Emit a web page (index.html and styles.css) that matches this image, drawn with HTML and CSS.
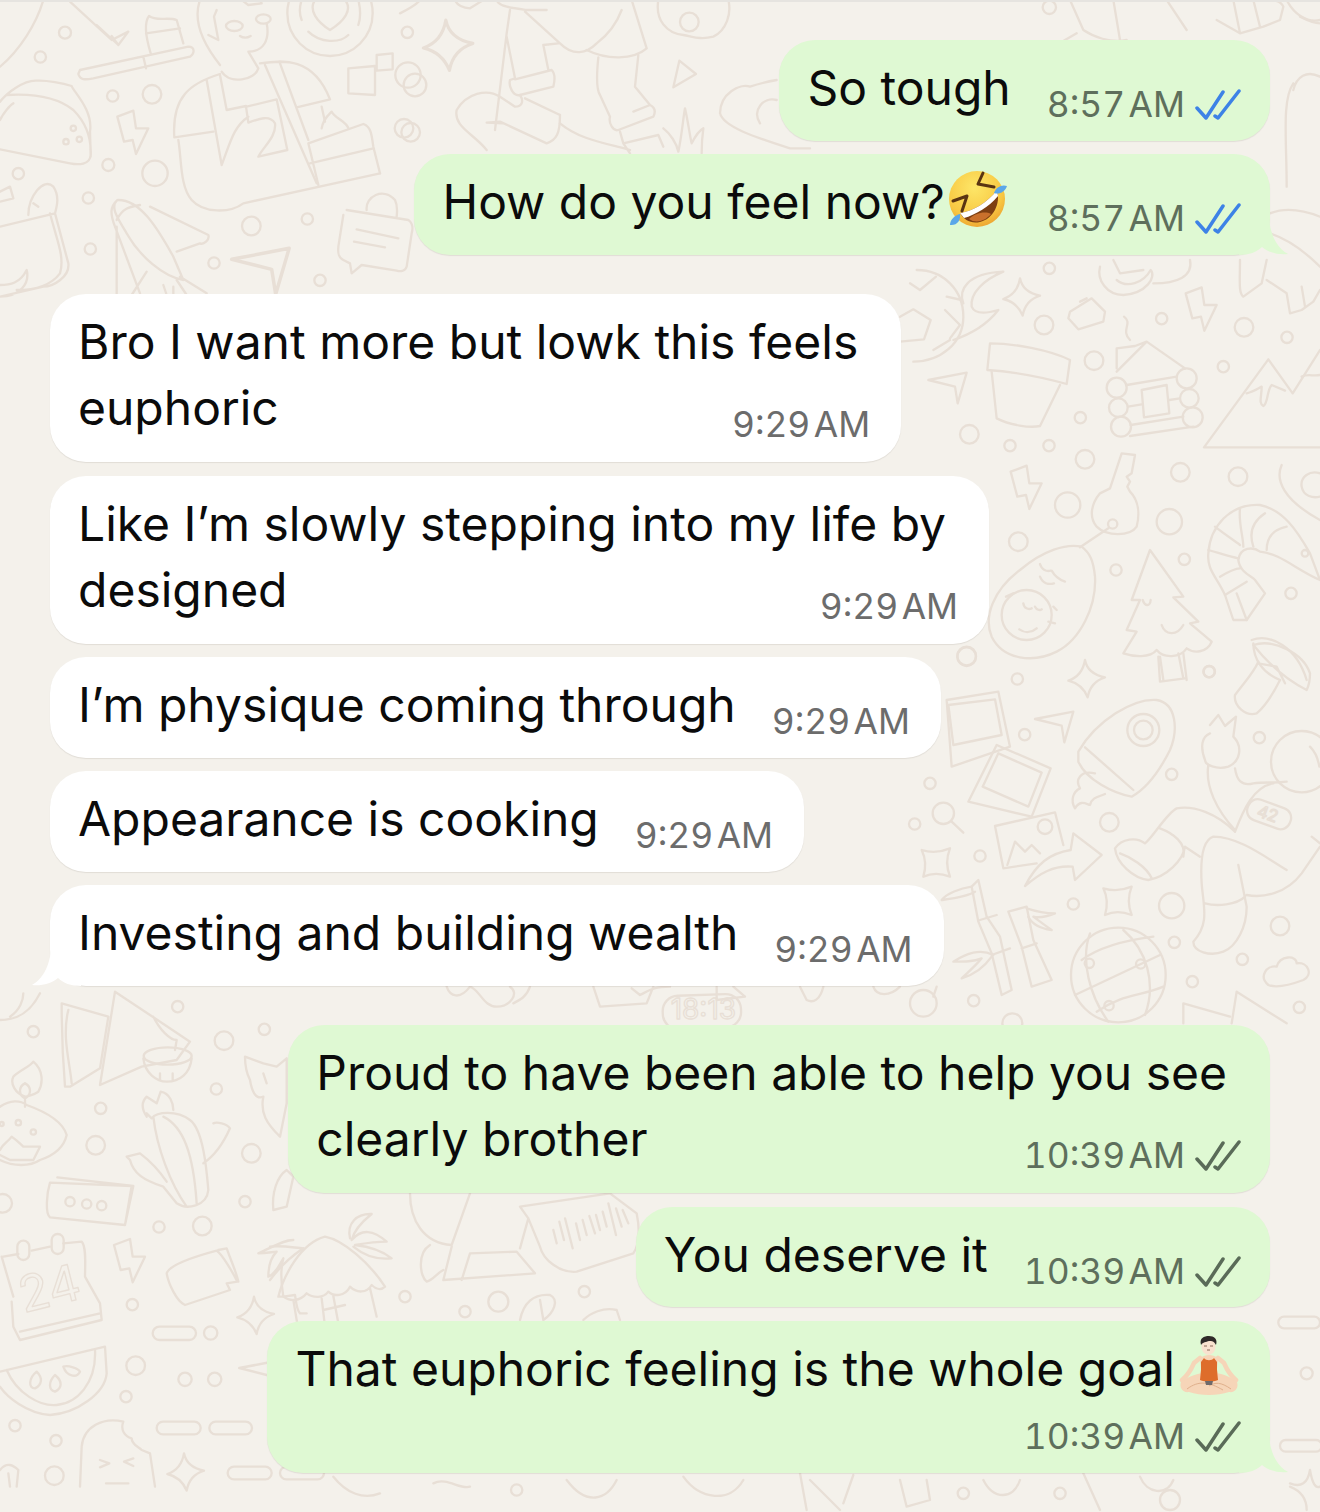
FILE: index.html
```html
<!DOCTYPE html>
<html lang="en">
<head>
<meta charset="utf-8">
<title>Chat</title>
<link rel="stylesheet" href="styles.css">
</head>
<body>
<div class="page">
<svg class="doodles" viewBox="0 0 3960 4536" aria-hidden="true">
  <defs>
    <path id="bolt" d="M2 20 L50 2 L58 55 L95 55 L58 132 L48 90 L22 95 Z"/>
    <path id="star" d="M50 0 Q58 42 110 52 Q66 66 58 112 Q42 72 0 62 Q42 48 50 0Z"/>
    <path id="sq" d="M0 5 Q42 18 85 0 Q68 42 85 85 Q42 68 5 85 Q18 42 0 5Z"/>
    <path id="plane" d="M0 22 L115 0 L88 92 L80 42 Z"/>
    <g id="right-a">
      <path d="M50 30 C130 30 190 90 190 170 C190 250 120 305 40 305"/>
      <path d="M0 170 L40 148 L92 180 L72 238 L0 245 M140 110 L185 120 M135 150 L180 195 L150 235 M108 50 L60 90 L30 70 M100 270 L150 240"/>
      <path d="M190 130 C175 90 200 40 310 35 C250 60 210 100 215 140 C225 165 260 160 295 150 C260 195 205 225 160 240"/>
      <path d="M270 250 C340 250 450 270 510 300 L500 372 C420 350 340 335 262 330 Z"/>
      <path d="M275 335 L290 475 C330 495 390 505 420 498 L480 375"/>
      <path d="M650 325 L650 265 L705 258 L740 245 L855 325 M650 335 L740 245"/>
      <path d="M672 170 C700 190 660 210 690 240"/>
      <circle cx="650" cy="383" r="30"/><circle cx="860" cy="355" r="30"/><circle cx="655" cy="443" r="28"/><circle cx="868" cy="415" r="28"/><circle cx="663" cy="500" r="30"/><circle cx="878" cy="472" r="30"/>
      <path d="M680 375 L830 350 M684 440 L725 433 M808 420 L840 415 M692 495 L850 470 M690 528 L880 500"/>
      <path d="M725 390 L800 375 L808 460 L732 472 Z"/>
      <path d="M912 562 L1105 298 L1178 400 L1260 270 M912 562 L1260 562 M1040 400 C1060 395 1075 385 1085 380 C1085 410 1075 430 1090 438 C1105 430 1100 390 1115 375 L1155 392"/>
      <path d="M1205 350 C1225 340 1240 350 1260 345"/>
      <path d="M600 20 C590 60 620 105 670 105 C740 100 770 50 752 30 C730 70 680 85 650 60 M640 0 L660 40 L730 30 M760 70 C830 70 880 50 870 0"/>
      <path d="M1020 0 C1020 60 1015 100 1030 110 L1085 70 L1100 0 M1160 100 L1170 160 L1205 150 L1240 125 L1260 90 M1205 80 L1215 140 M1100 60 L1160 100"/>
      <path d="M510 155 L575 115 L615 155 L610 185 L535 208 L505 175 Z M540 125 L560 115"/>
      <path d="M1145 615 C1125 660 1150 720 1260 780 M1260 640 C1230 630 1200 650 1205 680 C1210 710 1240 715 1260 710"/>
      <path d="M665 580 L705 585 L695 640 L680 650 L690 665 L682 680 L690 695 C715 720 720 760 710 800 C690 830 620 830 590 800 C565 770 575 730 600 700 L630 685 Z"/>
      <circle cx="638" cy="792" r="14"/><path d="M625 805 L540 862"/>
      <path d="M545 860 C500 850 430 870 360 930 C280 990 250 1070 275 1130 C310 1200 400 1210 470 1175 C540 1140 590 1040 585 950 C580 900 570 880 545 860 Z"/>
      <circle cx="380" cy="1065" r="75"/>
      <path d="M420 912 C425 930 440 935 452 932 M420 950 C428 970 445 975 462 970 M455 932 C465 950 480 960 495 965 M370 1030 C372 1045 385 1050 395 1045 M405 1040 C410 1050 420 1052 425 1048 M358 1108 C375 1120 395 1118 410 1105 M318 1010 L340 1000 M460 1040 L470 1050 M445 1085 L465 1090"/>
      <path d="M750 870 L850 1010 L820 1012 L895 1085 L870 1090 L935 1145 C920 1180 880 1180 860 1165 C840 1195 790 1195 770 1170 C750 1195 700 1190 670 1180 L710 1115 L680 1110 L720 1020 L695 1020 Z"/>
      <path d="M728 1020 C735 1040 750 1040 752 1020 M785 1095 C795 1125 830 1130 850 1095 M780 1190 L790 1260 M850 1180 L860 1260"/>
      <path d="M925 880 C930 800 990 730 1080 735 C1150 750 1190 810 1230 880 L1260 960 C1190 930 1140 880 1080 875 C1060 860 1020 860 1015 900 C1020 940 1060 950 1065 960 L1095 1000 L1040 1080 L1000 1080 L975 1005 C950 950 920 930 925 880 Z"/>
      <path d="M925 870 C960 880 990 890 1015 895 M945 800 C970 820 1000 840 1020 855 M1020 745 C1015 790 1030 830 1030 860 M1095 760 C1050 790 1050 830 1060 860 M1160 800 C1110 810 1100 840 1100 870 M960 950 C985 935 1005 925 1020 925 M975 1005 L1040 965 M1040 1080 L1010 1000"/>
      <circle cx="1215" cy="880" r="10"/>
      <path d="M1055 1140 C1110 1120 1190 1160 1220 1260 M1060 1150 C1060 1200 1090 1240 1140 1260"/>
    </g>
    <g id="right-b">
      <path d="M140 180 L295 155 L330 320 L155 380 Z"/>
      <path d="M145 195 L285 178 L305 285 L160 315 Z"/>
      <path d="M290 315 L452 385 L395 530 L205 485 Z"/>
      <path d="M295 340 L425 398 L385 500 L248 440 Z"/>
      <path d="M285 558 L465 517 L490 615 M285 558 L310 685 L410 670"/>
      <circle cx="435" cy="560" r="22"/>
      <path d="M322 675 L345 605 L375 635 L395 615 L420 640"/>
      <path d="M375 738 C410 670 450 640 512 630 L520 580 L605 645 L525 720 L518 680 C460 675 420 700 375 738 Z"/>
      <circle cx="130" cy="520" r="32"/><path d="M155 545 L190 578"/>
      <path d="M535 335 C590 240 700 175 770 180 C830 190 835 270 810 330 C780 390 740 445 695 470 C640 460 560 420 535 365 Z M555 322 L700 450"/>
      <circle cx="730" cy="270" r="48"/><circle cx="730" cy="270" r="28"/>
      <path d="M585 400 C540 390 525 420 540 445 C520 455 510 480 525 505 C540 480 555 490 570 495 C575 470 600 470 615 462"/>
      <path d="M930 255 L955 225 L975 258 L1008 230 L1000 290 C1030 320 1020 365 985 380 C950 390 915 375 915 360 C900 320 905 290 930 280"/>
      <path d="M925 375 C915 440 950 510 1005 570 M1005 385 C1010 420 1025 440 1060 430 C1090 425 1130 430 1160 425"/>
      <circle cx="1205" cy="365" r="92"/>
      <path d="M1230 320 C1250 340 1255 360 1258 380"/>
      <rect x="1040" y="490" width="135" height="65" rx="30" transform="rotate(20 1107 522)"/>
      <text class="dtext" x="1072" y="540" font-size="50" transform="rotate(20 1107 522)">42</text>
      <path d="M1005 575 C1030 510 1060 440 1120 430"/>
      <path d="M1160 690 C1080 640 1010 590 940 590 C910 600 900 650 905 730 C910 800 930 850 880 905 C880 935 930 950 970 935 C1010 920 1040 860 1040 800 L1015 675 M915 790 C950 800 1010 795 1035 770 M1040 765 C1090 775 1160 760 1205 700 L1260 620 M1235 590 L1260 610"/>
      <path d="M1005 575 C950 520 880 495 830 505 C800 520 760 590 735 610 C710 590 665 595 645 625 C650 670 700 715 745 720 C800 710 850 660 855 620 L900 650"/>
      <path d="M660 640 C690 650 740 680 755 715 M780 565 C820 580 860 610 850 650"/>
      <path d="M1060 15 C1120 -5 1210 40 1230 100 C1230 130 1225 140 1220 150 C1170 125 1120 90 1060 15 Z M1075 70 L1130 80 L1155 130 M1075 65 C1060 100 1030 130 1005 165 C1000 200 1040 230 1070 220 C1100 195 1120 160 1140 120"/>
      <path d="M780 125 L775 50 M850 115 L835 40 M780 125 L855 115"/>
      <path d="M235 720 L260 830 L300 890 L335 1050 L305 1065 L275 940 L235 845 L215 740 Z M240 840 L290 825 M275 945 L330 925"/>
      <path d="M325 815 L380 800 L400 900 L455 1020 L395 1040 L365 920 L325 815 M365 925 L410 910"/>
      <path d="M215 740 C180 745 140 760 125 780 C160 775 200 770 225 755"/>
      <path d="M380 805 C410 815 440 820 465 820 C440 830 420 835 400 830 C420 845 440 860 455 870 C420 865 395 850 385 830"/>
      <path d="M280 945 C240 925 200 940 160 965 C195 965 220 965 245 955 C225 980 200 1000 185 1015 C220 1005 250 985 275 950"/>
      <circle cx="655" cy="1005" r="142"/>
      <path d="M570 880 C540 960 570 1070 625 1145 M670 870 C740 930 770 1030 735 1125 M525 1065 L780 945 M545 960 C600 920 680 900 760 890 M590 1115 C670 1060 720 1070 790 1040"/>
      <circle cx="568" cy="970" r="14"/><circle cx="722" cy="972" r="14"/><circle cx="627" cy="1097" r="14"/>
      <path d="M1105 1035 C1075 1010 1100 975 1130 980 C1140 945 1190 945 1190 970 C1225 965 1240 1005 1210 1020 C1170 1035 1130 1045 1105 1035 Z"/>
      <path d="M850 1150 L850 1090 L990 1130 M1010 1055 L995 1150 M1010 1055 L1160 1150"/>
    </g>
  </defs>
  <g class="ln">
    <g transform="translate(-3375 780)"><use href="#right-a"/></g>
    <g transform="translate(-3375 1920)"><use href="#right-b"/></g>

    <path d="M130 0 C110 70 60 150 0 200"/>
    <path d="M210 5 L335 120 L385 95 L355 135 L290 75 M335 108 L355 135"/>
    <path d="M235 222 C240 240 255 240 280 235 L570 170 C585 160 585 140 565 140 L240 210 Z M430 170 L438 205 M452 160 C440 120 430 70 447 48 C470 65 505 50 530 60 L550 130"/>
    <path d="M438 100 L540 85"/>
    <circle cx="990" cy="40" r="128"/><path d="M925 95 C960 130 1020 130 1045 105 M1075 75 C1085 45 1080 20 1075 0 M905 60 C895 35 900 15 905 0 M990 90 C950 65 925 30 945 0 M990 90 C1030 65 1060 30 1035 0"/>
    <path d="M600 0 C575 70 620 145 660 195 M650 30 L642 50 L655 120 L625 105 M800 70 C810 120 790 155 745 155 L775 205 C765 240 690 255 665 215"/>
    <ellipse cx="703" cy="78" rx="25" ry="15"/><ellipse cx="790" cy="57" rx="22" ry="14"/><path d="M720 108 Q735 118 752 108 M725 0 L745 15 L785 10 L780 0"/>
    <path d="M660 222 C570 250 515 290 523 412 L640 395 M535 420 C545 480 540 560 575 600 C610 640 690 640 730 610 L1140 520 M620 240 L665 495 C690 430 700 380 745 350 M660 225 L680 330 L738 318 M740 320 L830 298 L862 450 L775 470 C790 440 830 410 825 370 C810 345 780 355 745 368 L738 320 M795 195 L950 550 M780 190 C850 180 940 170 990 298 L890 322 M840 190 L925 420 M965 320 L975 365"/>
    <path d="M925 430 L1090 372 C1115 380 1115 410 1120 440 L1140 520 M930 490 L1120 445 M965 385 C970 355 985 345 995 335 C1005 355 1040 365 1045 385 M925 430 L955 555"/>
    <path d="M1045 205 L1125 198 L1125 285 L1045 280 Z M1130 165 L1178 160 L1178 208 L1130 212 Z"/>
    <path d="M0 305 C20 280 70 240 110 242 C140 240 190 250 215 258 C220 275 280 330 270 395 L272 465 C270 495 235 495 210 490 L0 448 M20 285 C100 280 170 290 220 330 C260 370 275 420 272 470 M0 360 C10 340 30 315 40 310"/>
    <circle cx="220" cy="385" r="8"/><circle cx="198" cy="425" r="8"/><circle cx="238" cy="418" r="8"/>
    <path d="M0 575 L30 560 L40 595 L0 605 M85 645 C85 590 130 530 160 560 C180 590 170 620 165 640 L0 680 M100 610 L115 620 M165 640 L205 790 C210 830 160 860 130 860 L0 890 M150 640 C170 720 195 770 180 820 C150 860 100 870 50 870 M0 855 C30 855 60 850 80 810 C90 850 60 890 0 890"/>
    <path d="M352 600 C330 620 330 640 345 680 L420 880 M355 600 C420 600 470 680 520 770 L550 840 C490 830 420 770 380 700 C350 650 330 620 352 600 M350 660 C370 620 395 620 420 615 M450 620 L625 705 C630 720 610 735 600 730 L530 755 M350 680 L350 885 M395 885 L440 815 M490 855 L500 885 M520 860 L520 885 M540 830 L620 880 M560 885 L530 840"/>
    <use href="#plane" transform="translate(695 745) scale(1.5)"/>
    <path d="M1040 630 L1225 660 C1240 670 1238 690 1235 700 L1220 800 C1215 815 1200 815 1190 812 L1085 795 L1055 820 L1050 790 L1030 780 C1010 770 1015 750 1015 740 L1030 645 M1100 630 C1095 590 1150 560 1185 600 C1195 620 1190 645 1190 650 M1070 688 L1195 715 M1062 725 L1155 742"/>

    <g transform="translate(1200 0)">
      <path d="M0 40 C20 30 50 15 60 0 M165 0 C170 15 190 25 210 25 L250 0 M290 0 C295 20 340 25 380 30 L440 30 M375 35 L480 130 C520 170 560 160 590 130 C630 100 650 70 665 30"/>
      <path d="M330 30 L320 100 L285 390 M320 110 L345 235 L330 240 C325 260 340 290 360 285 L460 260 C465 240 465 220 455 210 L345 238 M430 135 L475 130 M430 135 L445 210"/>
      <path d="M360 285 C370 300 370 320 345 320 L300 290 C260 265 200 280 170 330 C160 380 220 400 260 450 M480 345 L375 295 M480 345 C480 400 470 420 440 430 L300 365 L260 368 L310 370"/>
      <path d="M480 370 C540 420 620 430 690 450 M695 0 L740 145 C700 180 620 180 560 150 M595 172 C590 220 590 270 600 285 L630 350 C625 370 640 395 655 390 L760 350 C770 330 760 320 750 315 L700 335 M715 165 L705 260 L750 315 M660 395 L670 430 L775 405 L790 440 M670 430 L690 460"/>
      <path d="M790 385 C810 400 830 430 835 455 C845 410 850 350 855 325 C865 370 870 410 875 430 C885 410 900 390 910 385 C905 420 905 450 905 460"/>
      <path d="M775 0 C765 60 800 100 850 105 C880 110 900 120 940 110 C980 90 995 40 985 0"/>
      <path d="M960 340 C960 280 1020 250 1050 260 C1080 250 1100 245 1130 240 M960 340 C970 380 1060 410 1170 445 L1230 445 M1080 370 C1055 330 1090 290 1130 300"/>
      <path d="M820 262 L838 182 L888 222 Z"/>
    </g>
    <use href="#star" transform="translate(1270 60) scale(1.35)"/>

    <path d="M3210 0 L3250 90 C3280 110 3330 130 3380 120 M3230 100 L3160 140 M3340 0 L3360 120 M3500 0 L3560 90 M3650 60 L3720 100 L3790 80 L3840 60 L3850 20 C3840 -5 3800 0 3780 0 M3720 100 L3700 0 M3780 80 L3760 0 M3880 250 C3845 300 3860 420 3860 560 M3960 230 C3920 210 3890 230 3880 270 M3900 50 C3920 60 3940 70 3960 70"/>
    <path d="M3860 0 C3880 40 3920 70 3960 60"/>
    <g transform="translate(3810 320)"><path d="M0 380 C60 400 110 440 150 480 M0 320 C50 300 100 310 150 330"/></g>

    <g transform="translate(2700 780)"><use href="#right-a"/></g>
    <g transform="translate(2700 1920)"><use href="#right-b"/></g>

    <path d="M1410 2960 C1440 2970 1450 3020 1490 3020 C1530 3020 1560 2980 1530 2960 M1340 2960 C1350 2990 1380 3000 1410 2960 M1590 2960 C1580 2990 1560 3000 1540 3010 M2150 2960 L2150 3000 L2235 2990 L2200 2960"/>
    <path d="M1895 2965 L1920 2985 C1950 2970 1960 2960 2010 2960 M1780 2960 L1800 3020 L1940 3010 L1960 2960"/>
    <path d="M2400 2960 L2420 3000 C2440 3010 2460 3000 2470 2960 M2620 2960 C2630 2990 2670 2990 2700 2960 M2800 2990 L2810 2960"/>
    <rect x="1988" y="2985" width="235" height="100" rx="46" transform="rotate(-2 2100 3030)"/>
    <text class="dtext" x="2012" y="3058" font-size="84">18:13</text>

    <g transform="translate(0 2940)">
      <path d="M0 120 C50 120 90 100 120 40 M30 110 C60 90 70 60 70 40"/>
      <path d="M185 70 L325 110 L300 265 L210 320 L195 320 C190 260 185 180 185 70 Z M205 90 C185 170 210 250 215 310 M345 35 L570 185 L530 240 L425 260 L300 315 L345 35 Z M460 110 C480 150 510 180 530 180 L525 210"/>
      <ellipse cx="503" cy="228" rx="72" ry="26"/><path d="M430 235 C435 280 470 305 500 305 C540 305 570 280 575 235 M480 280 L480 300 M518 280 L518 300"/>
      <path d="M0 380 C30 360 60 360 80 375 C150 400 190 430 200 465 C190 510 150 530 120 540 C90 560 40 560 0 540 M75 350 C45 340 30 310 40 290 C60 270 90 260 100 245 C130 270 130 310 115 335 C100 345 80 350 75 350 M75 310 C55 320 55 345 75 355 C95 345 95 320 75 310 M75 360 L75 380 M0 510 C10 490 20 490 35 470 C50 480 60 490 70 500 L120 500 L100 540 L30 540 L0 525"/>
      <circle cx="55" cy="428" r="8"/><circle cx="100" cy="456" r="8"/><circle cx="5" cy="432" r="6"/>
      <path d="M440 410 C420 380 430 360 440 350 L470 370 L482 335 C510 340 520 370 520 390 M440 400 L455 415 C470 395 530 390 570 420 C610 450 620 570 625 630 C620 680 560 690 530 670 L490 620 C430 600 400 580 390 540 L380 530 L420 520 C460 550 490 590 500 605 M460 410 C470 500 510 610 560 680 M490 410 C550 440 580 520 590 670 M610 550 C640 530 670 490 690 445 C680 430 650 425 640 430"/>
      <path d="M150 608 L395 618 L375 735 L150 712 C135 700 140 640 150 608 Z M172 592 L400 618 M375 735 L400 618"/>
      <circle cx="210" cy="665" r="14"/><circle cx="260" cy="672" r="14"/><circle cx="305" cy="677" r="14"/>
      <path d="M10 830 L55 822 M95 812 L150 800 M190 790 L245 785 C260 800 255 860 255 890 L300 970 L305 1020 L60 1080 L40 1040 L35 965 M5 830 L40 950 M300 1000 L60 1055"/>
      <rect x="52" y="782" width="36" height="58" rx="18"/><rect x="155" y="762" width="36" height="60" rx="18"/>
      <text class="dtext" x="55" y="985" font-size="150" transform="rotate(-14 120 930)">24</text>
      <path d="M0 1175 L315 1100 L320 1180 C315 1240 230 1300 150 1305 C80 1300 20 1250 0 1220 M20 1170 C50 1240 120 1280 170 1275 C230 1270 290 1210 285 1110"/>
      <path d="M110 1175 C85 1195 85 1225 105 1225 C125 1215 130 1195 110 1175 Z M165 1185 C145 1205 145 1230 165 1235 C185 1225 190 1205 165 1185 Z M190 1160 C205 1155 235 1165 240 1175 C230 1195 200 1190 190 1160 Z"/>
      <path d="M240 1520 L245 1400 C250 1340 310 1310 370 1325 C360 1350 375 1370 395 1375 C395 1395 415 1400 425 1410 L450 1420 L465 1520 M300 1440 L328 1450 L300 1462 M400 1435 L372 1445 L400 1458 M318 1510 L385 1510"/>
      <path d="M0 1470 C20 1445 40 1455 55 1470 L50 1520 M30 1520 L25 1480"/>
      <rect x="458" y="1040" width="130" height="40" rx="20"/>
      <rect x="470" y="1325" width="132" height="38" rx="19"/>
      <rect x="628" y="1325" width="128" height="38" rx="19"/>
      <rect x="683" y="1460" width="132" height="38" rx="19"/>
      <rect x="840" y="1460" width="132" height="38" rx="19"/>
      <path d="M500 880 C510 850 620 820 650 812 C665 820 700 880 712 905 L680 910 L690 930 L555 975 C530 965 505 910 500 880 Z M655 810 L680 805 C700 860 710 880 715 905"/>
      <path d="M880 780 C850 780 820 800 775 820 C800 820 820 815 830 815 C810 835 805 870 805 890 C830 880 840 850 850 835 C840 870 845 920 850 950 L885 945 C890 975 890 990 900 1000 L920 1000"/>
      <path d="M735 230 L790 250 L830 260 L860 235 L860 370 L840 470 C800 430 780 400 790 350 C765 360 755 330 750 300 C740 280 735 250 735 230 Z M790 280 L800 310"/>
      <path d="M820 690 C815 640 830 590 860 570 L880 590 L860 680 Z"/>
      <use href="#plane" transform="translate(718 1140) scale(1.1)"/>
    </g>

    <g transform="translate(810 3570)">
      <path d="M0 170 C40 165 80 175 100 175 M0 270 C30 230 70 195 100 175"/>
      <path d="M25 320 C40 260 90 160 165 140 C220 150 300 220 345 290 C335 300 320 300 305 285 C290 310 260 310 240 290 C225 320 190 320 175 305 C160 325 130 325 110 310 C90 335 60 335 40 320 Z M70 330 L85 420 M300 295 L320 380 M155 325 L165 410 M190 318 L205 400 M160 360 L225 345"/>
      <path d="M240 145 C230 100 260 70 305 72 C270 100 250 130 245 150 C275 115 310 120 350 155 C315 155 285 160 255 165 C300 170 340 185 365 205 C320 210 280 195 250 170"/>
      <path d="M420 10 C420 90 460 160 545 165 L600 10 M545 170 L520 270 L795 250 L740 185 L600 190 M600 190 L575 270 M480 165 C440 190 450 260 470 275 C490 270 500 250 520 240"/>
      <path d="M750 50 L1020 10 L1100 70 C1110 120 1110 160 1090 190 L920 245 C870 250 820 210 810 170 L775 85 L750 50 Z M775 85 L750 175"/>
      <path d="M850 120 L860 160 M868 95 L882 150 M885 85 L908 175 M918 100 L930 150 M938 90 L950 135 M958 78 L975 130 M978 75 L990 120 M998 65 L1010 110 M1015 40 L1038 135 M1038 55 L1055 110 M1058 60 L1075 100"/>
      <path d="M750 390 C760 340 790 310 840 315 C870 330 850 370 820 390 M810 330 L820 390 M940 390 C960 370 1000 350 1040 360 L1050 390"/>
      <circle cx="405" cy="320" r="17"/><circle cx="585" cy="365" r="17"/><circle cx="685" cy="335" r="30"/><circle cx="943" cy="305" r="17"/>
    </g>

    <path d="M2400 4420 L2420 4530 M2430 4440 L2520 4530 M2560 4425 L2530 4510 M1000 4430 C1040 4480 1090 4500 1140 4480 M1300 4450 C1340 4430 1380 4470 1410 4460 M1700 4440 C1760 4520 1820 4500 1850 4440 M2050 4430 C2100 4500 2190 4510 2230 4440 M2700 4440 L2720 4520 L2790 4500 L2780 4440 M2950 4440 C2980 4500 3040 4500 3060 4440 M3250 4420 L3300 4530 M3420 4430 C3440 4480 3500 4490 3520 4440"/>
    <rect x="3835" y="3950" width="125" height="35" rx="17"/>
    <rect x="3840" y="4320" width="125" height="35" rx="17"/>
    <circle cx="3920" cy="4120" r="18"/>
    <path d="M3870 4450 Q3920 4470 3930 4410 Q3940 4470 3960 4460 M3870 4460 Q3920 4480 3920 4530"/>
    <circle cx="3510" cy="4500" r="30"/><circle cx="3180" cy="4480" r="17"/><circle cx="1550" cy="4470" r="17"/><circle cx="2890" cy="4480" r="17"/>

    <circle cx="195" cy="98" r="18"/><circle cx="121" cy="171" r="17"/><circle cx="338" cy="288" r="17"/><circle cx="456" cy="283" r="28"/><circle cx="325" cy="495" r="18"/><circle cx="465" cy="520" r="38"/><circle cx="55" cy="521" r="17"/><circle cx="265" cy="594" r="17"/><circle cx="754" cy="678" r="28"/><circle cx="922" cy="657" r="17"/><circle cx="271" cy="747" r="17"/><circle cx="642" cy="789" r="17"/><circle cx="960" cy="841" r="17"/><circle cx="1222" cy="97" r="17"/><circle cx="1232" cy="397" r="28"/><circle cx="1245" cy="255" r="34"/>
    <circle cx="2068" cy="66" r="28"/><circle cx="2412" cy="192" r="17"/><circle cx="1224" cy="225" r="38"/><circle cx="1212" cy="385" r="28"/>
    <circle cx="3148" cy="22" r="20"/><circle cx="3130" cy="285" r="30"/>

    <g transform="translate(2700 780)">
      <circle cx="448" cy="25" r="17"/><circle cx="432" cy="195" r="28"/><circle cx="785" cy="176" r="17"/><circle cx="1032" cy="202" r="28"/><circle cx="1161" cy="232" r="17"/><circle cx="970" cy="320" r="17"/><circle cx="582" cy="302" r="28"/><circle cx="541" cy="473" r="17"/><circle cx="208" cy="523" r="28"/><circle cx="330" cy="557" r="17"/><circle cx="447" cy="557" r="17"/><circle cx="555" cy="598" r="28"/><circle cx="841" cy="637" r="28"/><circle cx="1014" cy="650" r="28"/><circle cx="503" cy="735" r="38"/><circle cx="355" cy="845" r="28"/><circle cx="808" cy="785" r="38"/><circle cx="853" cy="898" r="17"/><circle cx="648" cy="930" r="17"/><circle cx="1173" cy="1000" r="17"/><circle cx="200" cy="1190" r="28"/><circle cx="927" cy="1235" r="17"/>
    </g>
    <g transform="translate(2700 1920)">
      <circle cx="200" cy="48" r="28"/><circle cx="352" cy="117" r="17"/><circle cx="928" cy="95" r="17"/><circle cx="374" cy="284" r="17"/><circle cx="1078" cy="293" r="17"/><circle cx="815" cy="403" r="17"/><circle cx="90" cy="430" r="17"/><circle cx="44" cy="552" r="17"/><circle cx="628" cy="547" r="28"/><circle cx="240" cy="648" r="17"/><circle cx="520" cy="792" r="17"/><circle cx="815" cy="797" r="38"/><circle cx="1140" cy="858" r="28"/><circle cx="823" cy="907" r="17"/><circle cx="1027" cy="958" r="17"/><circle cx="877" cy="1025" r="17"/><circle cx="1198" cy="1102" r="17"/><circle cx="221" cy="1082" r="17"/><circle cx="70" cy="1090" r="40"/><circle cx="337" cy="1150" r="30"/>
    </g>
    <g transform="translate(0 2940)">
      <circle cx="533" cy="80" r="17"/><circle cx="100" cy="155" r="17"/><circle cx="672" cy="182" r="28"/><circle cx="793" cy="148" r="17"/><circle cx="649" cy="327" r="17"/><circle cx="302" cy="385" r="17"/><circle cx="287" cy="496" r="28"/><circle cx="754" cy="520" r="28"/><circle cx="735" cy="665" r="17"/><circle cx="477" cy="741" r="17"/><circle cx="607" cy="738" r="28"/><circle cx="397" cy="974" r="17"/><circle cx="632" cy="1059" r="20"/><circle cx="407" cy="1157" r="28"/><circle cx="555" cy="1198" r="20"/><circle cx="644" cy="1198" r="20"/><circle cx="378" cy="1250" r="17"/><circle cx="45" cy="1337" r="17"/><circle cx="168" cy="1382" r="17"/><circle cx="163" cy="1487" r="28"/><circle cx="8" cy="670" r="28"/>
    </g>

    <use href="#bolt" x="350" y="330"/>
    <use href="#bolt" x="3555" y="860"/>
    <use href="#bolt" x="3030" y="1395"/>
    <use href="#bolt" x="340" y="3715"/>
    <use href="#star" x="3010" y="835"/>
    <use href="#star" x="3205" y="1980"/>
    <use href="#star" x="712" y="3890"/>
    <use href="#star" x="502" y="4360"/>
    <use href="#sq" x="2765" y="2545"/>
    <use href="#sq" x="3310" y="2660"/>
    <use href="#plane" x="2785" y="1118"/>
    <use href="#plane" x="3105" y="2135"/>
  </g>
</svg>

<main class="chat">
  <section class="group out">
    <div class="bubble">
      <div class="row"><span class="text">So tough</span><span class="meta"><span class="time">8:57 AM</span><svg class="tick read" viewBox="0 0 46 32"><path d="M2 19 L11 29 L28 3 M20 27 L23 29 L44 2"/></svg></span></div>
    </div>
    <div class="bubble tailed">
      <div class="row"><span class="text">How do you feel now?<svg class="emoji rofl" viewBox="0 0 60 60">
        <defs><radialGradient id="face" cx=".45" cy=".3" r=".8"><stop offset="0" stop-color="#fde668"/><stop offset=".65" stop-color="#f8c842"/><stop offset="1" stop-color="#e8952a"/></radialGradient></defs>
        <circle cx="30" cy="30" r="28" fill="url(#face)"/>
        <path d="M13 44 C26 42 40 34 50 21 C54 35 46 50 33 53 C24 55 17 51 13 44Z" fill="#7d3f12"/>
        <path d="M22 50 C28 44 38 42 44 45 C38 52 29 55 22 50Z" fill="#c9702c"/>
        <path d="M13 44 C26 42 40 34 50 21 L51 27 C42 38 28 46 17 49Z" fill="#fff"/>
        <path d="M6 32 L20 27 L15 42 M47 18 L31 15 L36 4" fill="none" stroke="#5a3412" stroke-width="3" stroke-linecap="round" stroke-linejoin="round"/>
        <path d="M3 56 C3 51 8 46 13 45 C14 51 10 57 3 56Z M60 17 C55 15 49 18 47 24 C52 26 58 23 60 17Z" fill="#5ba7e8"/>
      </svg></span><span class="meta"><span class="time">8:57 AM</span><svg class="tick read" viewBox="0 0 46 32"><path d="M2 19 L11 29 L28 3 M20 27 L23 29 L44 2"/></svg></span></div>
      <svg class="tail tail-out" viewBox="0 0 50 40"><path d="M30 0 C30 15 36 32 49 39 C40 40 30 38 23 32 C18 37 10 40 0 40 L0 0 Z"/></svg>
    </div>
  </section>

  <section class="group in">
    <div class="bubble double">
      <div class="row row-first"><span class="text">Bro I want more but lowk this feels</span></div>
      <div class="row"><span class="text">euphoric</span><span class="meta"><span class="time">9:29 AM</span></span></div>
    </div>
    <div class="bubble double">
      <div class="row row-first"><span class="text">Like I’m slowly stepping into my life by</span></div>
      <div class="row"><span class="text">designed</span><span class="meta"><span class="time">9:29 AM</span></span></div>
    </div>
    <div class="bubble">
      <div class="row"><span class="text">I’m physique coming through</span><span class="meta"><span class="time">9:29 AM</span></span></div>
    </div>
    <div class="bubble">
      <div class="row"><span class="text">Appearance is cooking</span><span class="meta"><span class="time">9:29 AM</span></span></div>
    </div>
    <div class="bubble tailed">
      <div class="row"><span class="text">Investing and building wealth</span><span class="meta"><span class="time">9:29 AM</span></span></div>
      <svg class="tail tail-in" viewBox="0 0 50 40"><path d="M30 0 C30 15 36 32 49 39 C40 40 30 38 23 32 C18 37 10 40 0 40 L0 0 Z"/></svg>
    </div>
  </section>

  <section class="group out">
    <div class="bubble double">
      <div class="row row-first"><span class="text">Proud to have been able to help you see</span></div>
      <div class="row"><span class="text">clearly brother</span><span class="meta"><span class="time">10:39 AM</span><svg class="tick" viewBox="0 0 46 32"><path d="M2 19 L11 29 L28 3 M20 27 L23 29 L44 2"/></svg></span></div>
    </div>
    <div class="bubble">
      <div class="row"><span class="text">You deserve it</span><span class="meta"><span class="time">10:39 AM</span><svg class="tick" viewBox="0 0 46 32"><path d="M2 19 L11 29 L28 3 M20 27 L23 29 L44 2"/></svg></span></div>
    </div>
    <div class="bubble tailed">
      <div class="row"><span class="text">That euphoric feeling is the whole goal<svg class="emoji yoga" viewBox="0 0 60 60">
        <path d="M2 46 C10 40 20 37 26 37 L34 37 C42 37 50 40 58 46 C60 52 56 57 50 56 C38 60 22 60 10 56 C4 57 0 52 2 46Z" fill="#f6d5b8"/>
        <path d="M8 53 C20 44 30 46 44 54 M52 53 C42 46 36 46 30 50" fill="none" stroke="#e0b08c" stroke-width="1"/>
        <path d="M21 22 L15 27 C12 34 8 40 3 44 M39 22 L45 27 C48 34 52 40 57 44" fill="none" stroke="#f6d5b8" stroke-width="4.500" stroke-linecap="round"/>
        <path d="M21 22 C24 20 27 19 30 19 C33 19 36 20 39 22 L38 33 L40 44 C34 47 26 47 21 44 L22 33 Z" fill="#f6d5b8"/>
        <path d="M22 26 L25 22 C27 25 33 25 35 22 L38 26 L38 34 L39 44 C34 46 26 46 21 44 L22 34 Z" fill="#de6d2b"/>
        <path d="M26 45 L34 45 L33 49 L27 49Z" fill="#6f6a6a"/>
        <ellipse cx="29.500" cy="10.500" rx="7" ry="8.500" fill="#f9e2cf"/>
        <path d="M22 9 C20 2 25 0 30 0 C35 0 39 3 37 9 C35 5 33 5 30 5 C27 6 24 6 22 9Z" fill="#2f2a28"/>
        <path d="M25 10 L28 10 M31 10 L34 10 M28 14 L31 14" stroke="#8a6a58" stroke-width="1" fill="none"/>
      </svg></span></div>
      <div class="row row-meta"><span class="meta"><span class="time">10:39 AM</span><svg class="tick" viewBox="0 0 46 32"><path d="M2 19 L11 29 L28 3 M20 27 L23 29 L44 2"/></svg></span></div>
      <svg class="tail tail-out" viewBox="0 0 50 40"><path d="M30 0 C30 15 36 32 49 39 C40 40 30 38 23 32 C18 37 10 40 0 40 L0 0 Z"/></svg>
    </div>
  </section>
</main>
</div>
</body>
</html>
```

FILE: styles.css
```css
* { box-sizing: border-box; }
html, body { margin: 0; padding: 0; }
body { background: #f4f1eb; font-family: Inter, "Liberation Sans", sans-serif; }

.page {
  position: relative;
  width: 1320px;
  height: 1512px;
  overflow: hidden;
  border-top: 2px solid #e6e4e0;
}

.doodles {
  position: absolute;
  left: 0;
  top: -2px;
  width: 1320px;
  height: 1512px;
}
.ln {
  fill: none;
  stroke: #e8dfd6;
  stroke-width: 7;
  stroke-linecap: round;
  stroke-linejoin: round;
}
.dtext {
  font-family: Inter, sans-serif;
  stroke-width: 4;
}

.chat {
  position: relative;
  display: flex;
  flex-direction: column;
  gap: 39.5px;
  padding: 38px 50px 0;
}
.group {
  display: flex;
  flex-direction: column;
  gap: 13.4px;
}
.group.out { align-items: flex-end; }
.group.in { align-items: flex-start; }

.bubble {
  position: relative;
  display: flex;
  flex-direction: column;
  padding: 15px 31px 19.7px 28px;
  border-radius: 36px;
  box-shadow: 0 1px 1px rgba(60, 50, 40, 0.10);
}
.bubble.double { padding-bottom: 21px; }
.out .bubble { background: #dff9d3; }
.in .bubble { background: #ffffff; }

.row {
  display: flex;
  justify-content: space-between;
  align-items: flex-end;
  gap: 36px;
  height: 66px;
}
.row-first { padding-right: 12px; }
.row-meta { justify-content: flex-end; height: 51.3px; }
.text {
  font-size: 48px;
  line-height: 66px;
  color: #0b0b0b;
  white-space: nowrap;
}
.meta {
  display: flex;
  align-items: center;
  gap: 10px;
  height: 44px;
  margin-bottom: -6px;
}
.out .meta { margin-right: -2px; }
.time {
  font-size: 35.4px;
  line-height: 44px;
  word-spacing: -6px;
  font-variant-numeric: tabular-nums;
  white-space: nowrap;
}
.out .time { color: #5e6f5c; }
.in .time { color: #6c6c6c; }

.tick {
  width: 46px;
  height: 32px;
  fill: none;
  stroke: #5a6b58;
  stroke-width: 3.5;
  stroke-linecap: round;
  stroke-linejoin: round;
}
.tick.read { stroke: #3d82e6; }

.emoji {
  width: 60px;
  height: 60px;
  vertical-align: -10px;
  margin-left: 4px;
}
.rofl { margin-left: 2px; margin-right: 4px; }

.tail {
  position: absolute;
  bottom: 0;
  width: 50px;
  height: 40px;
}
.tail-out { right: -19px; fill: #dff9d3; }
.tail-in { left: -19px; transform: scaleX(-1); fill: #ffffff; }
```
